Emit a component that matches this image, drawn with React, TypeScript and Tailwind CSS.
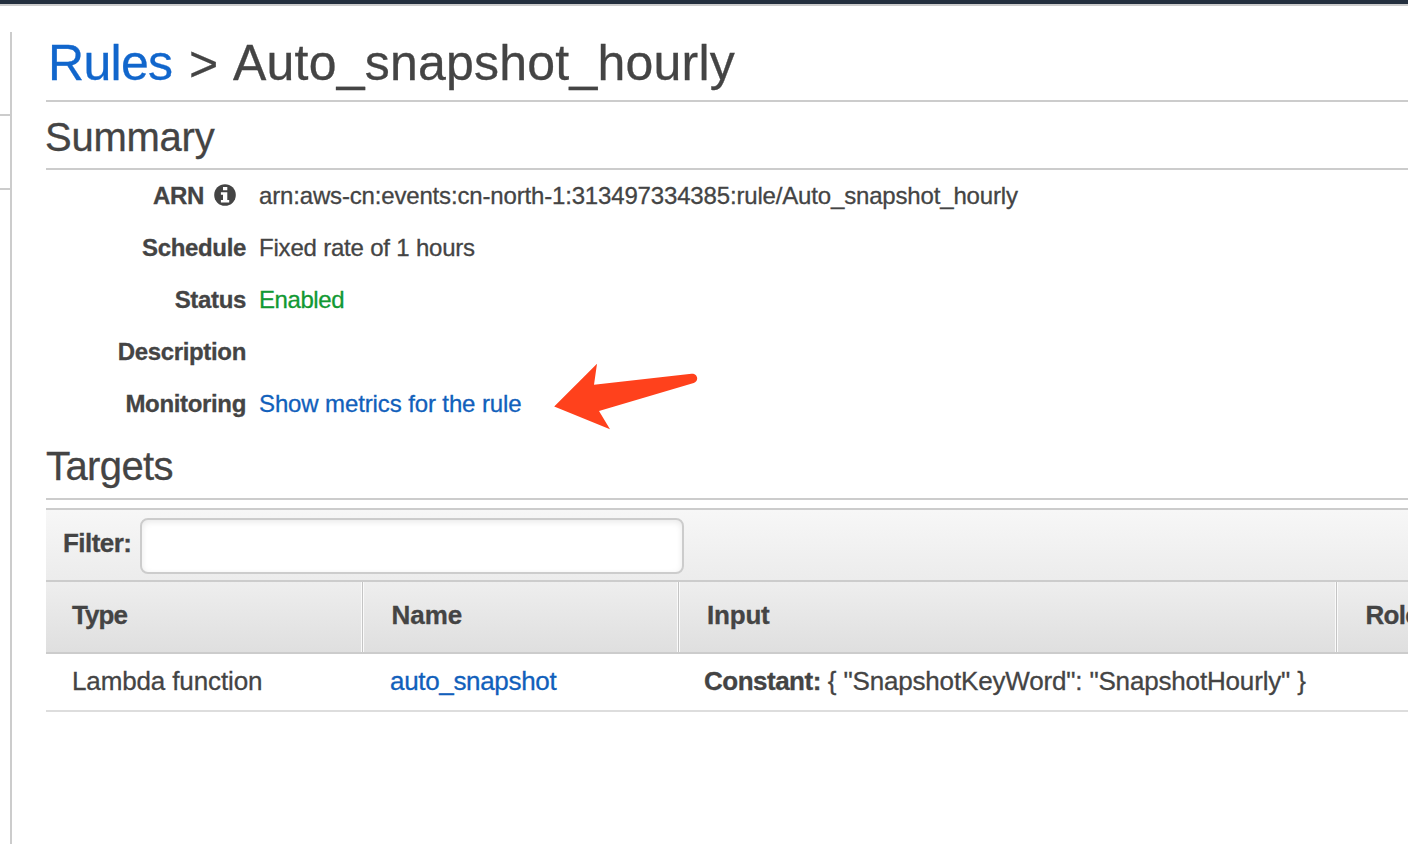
import type { ReactNode } from "react";

function InfoIcon() {
  return (
    <svg className="relative -top-px mr-[10px] ml-[10px] size-[22px]" viewBox="0 0 22 22">
      <circle cx="11" cy="11" r="10.8" fill="#444444" />
      <path d="M9 2.9h4.3v3.4H9zM6.9 8.2h6.4v7.7h1.9v2.6H6.9v-2.6H9v-5.1H6.9z" fill="white" />
    </svg>
  );
}

function SummaryRow({ label, children }: { label: ReactNode; children?: ReactNode }) {
  return (
    <div className="flex h-[52px] items-center text-[24px] leading-[52px]">
      <div className="flex w-[200px] shrink-0 items-center justify-end font-bold tracking-[-0.34px]">{label}</div>
      <div className="ml-[13px] whitespace-nowrap">{children}</div>
    </div>
  );
}

function Divider() {
  return (
    <div className="flex h-[70px] w-[3px] shrink-0">
      <span className="w-px bg-[#fafafa]" />
      <span className="w-px bg-[#c4c4c4]" />
      <span className="w-px bg-[#fafafa]" />
    </div>
  );
}

export default function App() {
  return (
    <div className="relative flex h-[844px] w-[1408px] flex-col overflow-hidden bg-white font-['Liberation_Sans',Arial,sans-serif] text-[#444444] [-webkit-text-stroke:0.3px]">
      <header className="h-[6px] shrink-0 border-b-2 border-[#cccccc] bg-[#232f3e]" />
      <div className="flex flex-1 pt-[26px]">
        <aside className="w-[12px] shrink-0 border-r-2 border-[#cccccc] pt-[82px]">
          <div className="h-[76px] border-y-2 border-[#cccccc]" />
        </aside>
        <main className="ml-[34px] w-[1362px] shrink-0">
          <h1 className="flex h-[70px] items-center border-b-2 border-[#cccccc] pb-[6px] pl-[2px] text-[50px] whitespace-nowrap">
            <a className="w-[126px] tracking-[-0.7px] text-[#1166cc]">Rules</a>
            <span className="ml-[15px] w-[30px] pt-[3px]">&gt;</span>
            <span className="ml-[14px] tracking-[0.22px]">Auto_snapshot_hourly</span>
          </h1>
          <h2 className="-ml-px flex h-[68px] items-center pt-[1px] text-[40px] tracking-[-0.25px] shadow-[inset_0_-2px_0_#cccccc] [clip-path:inset(0_0_0_1px)]">
            <span>Summary</span>
          </h2>
          <section className="h-[262px]">
            <SummaryRow
              label={
                <>
                  <span>ARN</span>
                  <InfoIcon />
                </>
              }
            >
              <span className="tracking-[-0.165px]">arn:aws-cn:events:cn-north-1:313497334385:rule/Auto_snapshot_hourly</span>
            </SummaryRow>
            <SummaryRow label={<span>Schedule</span>}>
              <span className="tracking-[-0.2px]">Fixed rate of 1 hours</span>
            </SummaryRow>
            <SummaryRow label={<span>Status</span>}>
              <span className="tracking-[-0.43px] text-[#119933]">Enabled</span>
            </SummaryRow>
            <SummaryRow label={<span>Description</span>} />
            <SummaryRow label={<span>Monitoring</span>}>
              <a className="tracking-[-0.12px] text-[#1160bb]">Show metrics for the rule</a>
            </SummaryRow>
          </section>
          <h2 className="flex h-[68px] items-center border-b-2 border-[#cccccc] pt-[2px] text-[40px] tracking-[-0.6px]">
            <span>Targets</span>
          </h2>
          <section className="mt-[8px] text-[26px] whitespace-nowrap">
            <div className="flex h-[74px] border-y-2 border-[#cccccc] bg-linear-to-b from-[#f7f7f7] to-[#ececec] pl-[17px]">
              <label className="w-[77px] leading-[66px] font-bold tracking-[-0.55px]">Filter:</label>
              <input className="mt-[8px] h-[56px] w-[544px] rounded-[8px] border-2 border-[#cccccc] bg-white shadow-[inset_0_2px_6px_rgba(0,0,0,0.09)] outline-none" />
            </div>
            <div className="flex h-[72px] border-b-2 border-[#cccccc] bg-linear-to-b from-[#eeeeee] to-[#dfdfdf] leading-[66px] font-bold">
              <div className="w-[315px] shrink-0 pl-[26px] tracking-[-0.9px]"><span>Type</span></div>
              <Divider />
              <div className="w-[313px] shrink-0 pl-[27.5px]"><span>Name</span></div>
              <Divider />
              <div className="w-[655px] shrink-0 pl-[27px] tracking-[-0.2px]"><span>Input</span></div>
              <Divider />
              <div className="w-[100px] shrink-0 pl-[27.5px] tracking-[-0.7px]"><span>Role</span></div>
            </div>
            <div className="flex h-[58px] border-b-2 border-[#dddddd] leading-[54px]">
              <div className="w-[318px] shrink-0 pl-[26px] tracking-[-0.13px]"><span>Lambda function</span></div>
              <div className="w-[314px] shrink-0 pl-[26px] tracking-[-0.33px]"><a className="text-[#1160bb]">auto_snapshot</a></div>
              <div className="shrink-0 pl-[26px]">
                <b className="tracking-[-0.5px]">Constant:</b>
                <span className="ml-[7px] tracking-[-0.17px]">{'{ "SnapshotKeyWord": "SnapshotHourly" }'}</span>
              </div>
            </div>
          </section>
        </main>
      </div>
      <svg className="absolute top-[350px] left-[530px]" width="190" height="90" viewBox="0 0 190 90" fill="#ff411c">
        <path d="M24.2 56.5 67 13.8 64 34.7 161.5 23.8C164.8 23.6 167.2 25.7 167.2 28.6 167.2 30.8 165.7 32.5 163.7 33.1L69 61 80 79.3Z" />
      </svg>
    </div>
  );
}
